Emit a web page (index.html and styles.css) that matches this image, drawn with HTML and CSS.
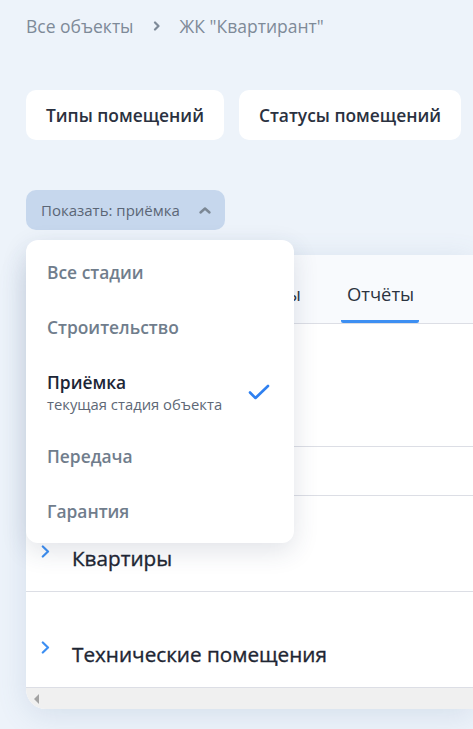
FILE: index.html
```html
<!DOCTYPE html>
<html lang="ru">
<head>
<meta charset="utf-8">
<title>ЖК Квартирант</title>
<link rel="stylesheet" href="styles.css">
</head>
<body>
<div class="page">
  <nav class="crumbs">
    <span class="crumb">Все объекты</span>
    <svg class="crumb-sep" width="8" height="10" viewBox="0 0 8 10"><path d="M2 1.5 L5.5 5 L2 8.5" fill="none" stroke="#7e8a98" stroke-width="2.2" stroke-linecap="round" stroke-linejoin="round"/></svg>
    <span class="crumb">ЖК "Квартирант"</span>
  </nav>

  <div class="actions">
    <button class="btn">Типы помещений</button>
    <button class="btn">Статусы помещений</button>
  </div>

  <div class="filter">
    <button class="toggle">
      <span>Показать: приёмка</span>
      <svg width="14" height="9" viewBox="0 0 14 9"><path d="M2.5 6.5 L7 2.5 L11.5 6.5" fill="none" stroke="#7b8794" stroke-width="2.4" stroke-linecap="round" stroke-linejoin="round"/></svg>
    </button>
    <ul class="menu">
      <li class="item">Все стадии</li>
      <li class="item">Строительство</li>
      <li class="item active">
        <div class="item-text">
          <span class="item-title">Приёмка</span>
          <span class="item-sub">текущая стадия объекта</span>
        </div>
        <svg class="check" width="22" height="16" viewBox="0 0 22 16"><path d="M2 8.5 L7.5 14 L20 2" fill="none" stroke="#2f80f0" stroke-width="2.6" stroke-linecap="round" stroke-linejoin="round"/></svg>
      </li>
      <li class="item">Передача</li>
      <li class="item">Гарантия</li>
    </ul>
  </div>

  <section class="card">
    <div class="tabs">
      <div class="tab tab-first">Документы</div>
      <div class="tab tab-active">Отчёты</div>
    </div>
    <div class="row row-tall"></div>
    <div class="row row-short"></div>
    <div class="row">
      <svg class="chev" width="9" height="13" viewBox="0 0 9 13"><path d="M1.8 1.5 L7 6.5 L1.8 11.5" fill="none" stroke="#3d8ff2" stroke-width="2.2" stroke-linecap="round" stroke-linejoin="round"/></svg>
      <span class="row-title">Квартиры</span>
    </div>
    <div class="row">
      <svg class="chev" width="9" height="13" viewBox="0 0 9 13"><path d="M1.8 1.5 L7 6.5 L1.8 11.5" fill="none" stroke="#3d8ff2" stroke-width="2.2" stroke-linecap="round" stroke-linejoin="round"/></svg>
      <span class="row-title">Технические помещения</span>
    </div>
    <div class="scrollbar">
      <span class="arrow-left"></span>
    </div>
  </section>
</div>
</body>
</html>
```

FILE: styles.css
```css
* { box-sizing: border-box; }
html, body {
  margin: 0;
  padding: 0;
  background: #edf3fa;
  overflow: hidden;
  height: 729px;
}
body {
  font-family: "Open Sans", "Noto Sans", sans-serif;
}
.page {
  padding: 16px 0 0 26px;
  width: 473px;
}
.crumbs {
  display: flex;
  align-items: center;
  height: 20px;
}
.crumb {
  font-size: 17.5px;
  color: #7e8a98;
  line-height: 20px;
  white-space: nowrap;
}
.crumb-sep {
  margin: 0 19px 0 19px;
}
.actions {
  display: flex;
  gap: 15px;
  margin-top: 54px;
  white-space: nowrap;
}
.btn {
  height: 50px;
  border: none;
  background: #ffffff;
  border-radius: 10px;
  padding: 0 20px;
  font-family: inherit;
  font-size: 17.4px;
  font-weight: 600;
  color: #2a3140;
  flex: none;
}
.filter {
  position: relative;
  margin-top: 50px;
  z-index: 2;
}
.toggle {
  display: flex;
  align-items: center;
  justify-content: space-between;
  width: 199px;
  height: 40px;
  border: none;
  border-radius: 10px;
  background: #c6d7ed;
  padding: 0 13px 0 15px;
  font-family: inherit;
  font-size: 15px;
  color: #5b6676;
}
.menu {
  position: absolute;
  top: 50px;
  left: 0;
  width: 268px;
  margin: 0;
  padding: 4px 0;
  list-style: none;
  background: #ffffff;
  border-radius: 12px;
  box-shadow: 0 8px 26px rgba(40, 60, 90, 0.14);
}
.item {
  height: 55px;
  display: flex;
  align-items: center;
  padding: 0 21px;
  font-size: 17.4px;
  font-weight: 600;
  color: #707d8c;
}
.item.active {
  height: 74.5px;
  justify-content: space-between;
  padding-right: 24px;
}
.item-text {
  display: flex;
  flex-direction: column;
  padding-top: 2px;
}
.item-title {
  color: #1c2636;
  line-height: 24px;
}
.item-sub {
  font-size: 14.8px;
  font-weight: 400;
  color: #5e6876;
  line-height: 21px;
}
.check {
  margin-top: 2px;
}
.card {
  margin-top: 25px;
  width: 447px;
  background: #ffffff;
  border-radius: 20px 0 0 20px;
  overflow: hidden;
  box-shadow: 0 6px 30px rgba(90, 120, 160, 0.16);
}
.tabs {
  display: flex;
  height: 69px;
  background: #f8fafd;
  border-bottom: 1px solid #dcdee5;
}
.tab {
  height: 68px;
  padding: 25px 6px 0;
  font-size: 18.4px;
  color: #2b3340;
  line-height: 28px;
  white-space: nowrap;
}
.tab-first {
  width: 281px;
  text-align: right;
}
.tab-active {
  margin-left: 34px;
  width: 78px;
  text-align: center;
  border-bottom: 3px solid #3d8ff2;
  border-radius: 0 0 2px 2px;
}
.row {
  height: 96px;
  border-bottom: 1px solid #dcdee5;
  display: flex;
  align-items: flex-start;
  padding: 48px 0 0 15px;
}
.row-tall { height: 123px; }
.row-short { height: 49px; }
.chev {
  margin-top: 1px;
}
.row-title {
  margin-left: 22px;
  font-size: 20.7px;
  font-weight: 400;
  -webkit-text-stroke: 0.35px #1e2633;
  color: #1e2633;
  line-height: 28px;
}
.scrollbar {
  height: 21px;
  background: #f0f0f0;
  display: flex;
  align-items: center;
  padding-left: 8px;
}
.arrow-left {
  width: 0;
  height: 0;
  border-top: 5px solid transparent;
  border-bottom: 5px solid transparent;
  border-right: 5px solid #a3a3a3;
}
```
